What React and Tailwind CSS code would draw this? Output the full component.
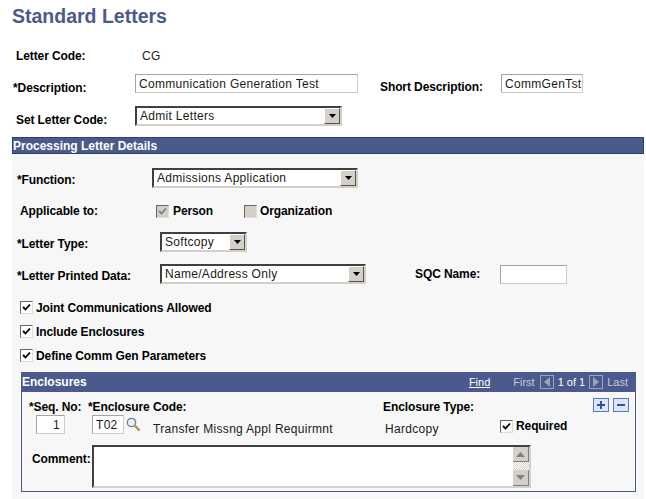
const Label = ({ className = "", children }) => (
  <span className={`block text-[12px] leading-[14px] font-bold text-black tracking-[-0.1px] whitespace-nowrap ${className}`}>
    {children}
  </span>
);

const Value = ({ className = "", children }) => (
  <span className={`block text-[12px] leading-[14px] text-[#1a1a1a] tracking-[0.3px] whitespace-nowrap ${className}`}>
    {children}
  </span>
);

const TextBox = ({ className = "", children }) => (
  <div className={`h-[19px] shrink-0 bg-white border border-t-[#a4a4a4] border-l-[#a4a4a4] border-r-[#cccccc] border-b-[#cccccc] flex items-center px-[3px] overflow-hidden ${className}`}>
    <Value>{children}</Value>
  </div>
);

const Arrow = () => (
  <svg width="7" height="4" viewBox="0 0 7 4">
    <path d="M0 0h7L3.5 4z" fill="#000" />
  </svg>
);

const Select = ({ className = "", children }) => (
  <div className={`h-[20px] shrink-0 bg-white border-2 border-t-[#404040] border-l-[#404040] border-r-[#d4d0c8] border-b-[#d4d0c8] flex items-center justify-between pl-[3px] ${className}`}>
    <Value>{children}</Value>
    <div className="w-[16px] h-[16px] bg-[#d4d0c8] border border-t-white border-l-white border-r-[#555] border-b-[#555] flex items-center justify-center">
      <Arrow />
    </div>
  </div>
);

const Check = ({ disabled, checked = true }) => (
  <div className={`w-[13px] h-[13px] shrink-0 border border-t-[#666] border-l-[#666] border-r-[#ddd] border-b-[#ddd] flex items-center justify-center ${disabled ? "bg-[#d4d0c8]" : "bg-white"}`}>
    {checked && (
      <svg width="9" height="9" viewBox="0 0 9 9">
        <path d="M1 4l2.5 2.5L8 1.5" fill="none" stroke={disabled ? "#808080" : "#000"} strokeWidth="1.8" />
      </svg>
    )}
  </div>
);

const CheckRow = ({ children, className = "" }) => (
  <div className={`flex items-center gap-[3px] ${className}`}>
    <Check />
    <Label>{children}</Label>
  </div>
);

const NavBtn = ({ d }) => (
  <div className="w-[14px] h-[14px] border border-[#9aa3bd] flex items-center justify-center">
    <svg width="6" height="10" viewBox="0 0 6 10">
      <path d={d} fill="#9aa3bd" />
    </svg>
  </div>
);

const RowBtn = ({ d }) => (
  <div className="w-[16px] h-[14px] bg-[#dbe6fa] border border-[#5b78c7] flex items-center justify-center">
    <svg width="10" height="10" viewBox="0 0 10 10">
      <path d={d} fill="#2f52a8" />
    </svg>
  </div>
);

const Magnifier = () => (
  <svg width="15" height="15" viewBox="0 0 15 15" className="shrink-0">
    <circle cx="5.5" cy="5.5" r="4.2" fill="#e4eef6" stroke="#6f7f88" strokeWidth="1.3" />
    <path d="M8.8 8.8l4.8 4.8" stroke="#a8914e" strokeWidth="2.2" />
  </svg>
);

const Scrollbar = () => (
  <div className="w-[16px] h-full flex flex-col shrink-0">
    <div className="h-[15px] bg-[#d4d0c8] border-r border-b border-r-[#808080] border-b-[#808080] flex items-center justify-center">
      <svg width="9" height="5" viewBox="0 0 9 5"><path d="M0 5h9L4.5 0z" fill="#808080" /></svg>
    </div>
    <div className="flex-1 bg-[repeating-conic-gradient(#d4d0c8_0_25%,#fff_0_50%)] bg-[length:2px_2px]" />
    <div className="h-[16px] bg-[#d4d0c8] border-r border-b border-r-[#808080] border-b-[#808080] flex items-center justify-center">
      <svg width="9" height="5" viewBox="0 0 9 5"><path d="M0 0h9L4.5 5z" fill="#808080" /></svg>
    </div>
  </div>
);

export default function App() {
  return (
    <div className="w-[646px] h-[499px] overflow-hidden bg-white font-['Liberation_Sans',Arial,sans-serif]">
      {/* page title */}
      <h1 className="pl-[12px] pt-[5px] h-[47px] text-[19.5px] leading-[23px] font-bold text-[#4a5a8c]">
        Standard Letters
      </h1>

      {/* header fields */}
      <div className="h-[18px] pl-[16px] flex items-center">
        <Label className="w-[126px]">Letter Code:</Label>
        <Value>CG</Value>
      </div>
      <div className="mt-[9px] h-[19px] pl-[13px] flex items-center">
        <Label className="w-[122px] pt-[8px]">*Description:</Label>
        <TextBox className="w-[223px]">Communication Generation Test</TextBox>
        <Label className="ml-[22px] w-[121px] pt-[6px]">Short Description:</Label>
        <TextBox className="w-[82px]">CommGenTst</TextBox>
      </div>
      <div className="mt-[13px] h-[20px] pl-[16px] flex items-center">
        <Label className="w-[119px] pt-[8px]">Set Letter Code:</Label>
        <Select className="w-[207px]">Admit Letters</Select>
      </div>

      {/* processing section */}
      <div className="mt-[11px] ml-[12px] w-[632px] h-[362px] bg-[#f7f7f7]">
        <div className="h-[17px] bg-[#4a5a8c] border border-[#2e3f72] flex items-center">
          <span className="text-[12px] leading-[14px] font-bold text-white">Processing Letter Details</span>
        </div>

        <div className="mt-[14px] h-[20px] pl-[5px] flex items-center">
          <Label className="w-[135px] pt-[4px]">*Function:</Label>
          <Select className="w-[206px]">Admissions Application</Select>
        </div>

        <div className="mt-[16px] h-[14px] pl-[8px] flex items-center">
          <Label className="w-[136px]">Applicable to:</Label>
          <div className="flex items-center gap-[4px] w-[88px]">
            <Check disabled />
            <Label>Person</Label>
          </div>
          <div className="flex items-center gap-[3px]">
            <Check disabled checked={false} />
            <Label>Organization</Label>
          </div>
        </div>

        <div className="mt-[14px] h-[20px] pl-[5px] flex items-center">
          <Label className="w-[143px] pt-[4px]">*Letter Type:</Label>
          <Select className="w-[87px]">Softcopy</Select>
        </div>

        <div className="mt-[12px] h-[20px] pl-[5px] flex items-center">
          <Label className="w-[143px] pt-[4px]">*Letter Printed Data:</Label>
          <Select className="w-[206px]">Name/Address Only</Select>
          <Label className="ml-[49px] w-[85px]">SQC Name:</Label>
          <TextBox className="w-[67px]" />
        </div>

        <CheckRow className="mt-[17px] ml-[8px] h-[13px]">Joint Communications Allowed</CheckRow>
        <CheckRow className="mt-[11px] ml-[8px] h-[13px]">Include Enclosures</CheckRow>
        <CheckRow className="mt-[11px] ml-[8px] h-[13px]">Define Comm Gen Parameters</CheckRow>

        {/* enclosures scroll area */}
        <div className="mt-[10px] ml-[9px] w-[615px] h-[120px] border border-[#4a5a8c] border-t-0">
          <div className="h-[20px] -mx-[1px] bg-[#4a5a8c] flex items-center pl-[1px]">
            <span className="text-[12px] leading-[14px] font-bold text-white">Enclosures</span>
            <div className="ml-auto flex items-center pr-[8px] text-[11px] leading-[13px] text-[#c4cadb]">
              <span className="underline text-white">Find</span>
              <span className="ml-[23px]">First</span>
              <div className="ml-[5px]"><NavBtn d="M6 0v10L0 5z" /></div>
              <span className="ml-[4px] text-white">1 of 1</span>
              <div className="ml-[4px]"><NavBtn d="M0 0v10l6-5z" /></div>
              <span className="ml-[4px]">Last</span>
            </div>
          </div>

          <div className="flex pl-[7px] pt-[8px]">
            <div className="w-[59px]">
              <Label>*Seq. No:</Label>
              <div className="mt-[1px] ml-[7px] h-[19px] w-[29px] bg-white border border-t-[#a4a4a4] border-l-[#a4a4a4] border-r-[#cccccc] border-b-[#cccccc] flex items-center justify-end px-[4px]">
                <Value>1</Value>
              </div>
            </div>
            <div className="w-[295px]">
              <Label>*Enclosure Code:</Label>
              <div className="mt-[1px] ml-[4px] h-[19px] flex items-start">
                <TextBox className="w-[32px]">T02</TextBox>
                <div className="ml-[2px] mt-[2px]"><Magnifier /></div>
                <Value className="ml-[12px] mt-[7px]">Transfer Missng Appl Requirmnt</Value>
              </div>
            </div>
            <div className="w-[117px]">
              <Label>Enclosure Type:</Label>
              <div className="mt-[8px] ml-[2px]">
                <Value>Hardcopy</Value>
              </div>
            </div>
            <div className="w-[93px] pt-[19px]">
              <CheckRow>Required</CheckRow>
            </div>
            <div className="flex gap-[4px] -mt-[2px]">
              <RowBtn d="M4 1h2v3h3v2H6v3H4V6H1V4h3z" />
              <RowBtn d="M1 4h8v2H1z" />
            </div>
          </div>

          <div className="mt-[9px] pl-[10px] flex">
            <Label className="w-[60px] pt-[7px]">Comment:</Label>
            <div className="w-[439px] h-[43px] bg-white border-2 border-t-[#404040] border-l-[#404040] border-r-[#d4d0c8] border-b-[#d4d0c8] flex justify-end">
              <Scrollbar />
            </div>
          </div>
        </div>
      </div>
    </div>
  );
}
